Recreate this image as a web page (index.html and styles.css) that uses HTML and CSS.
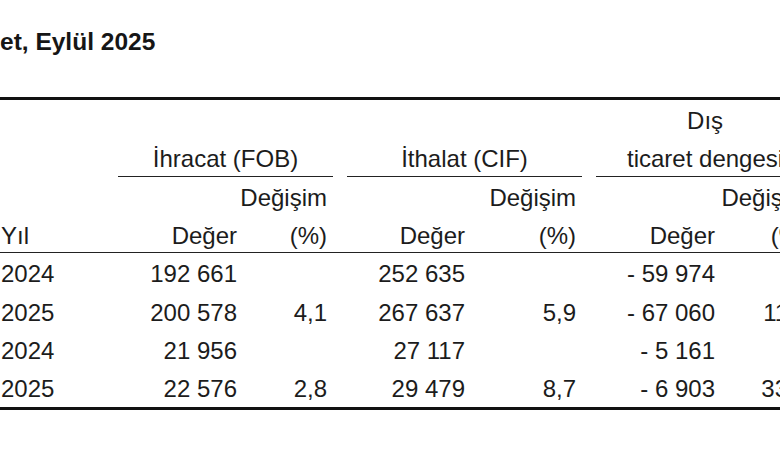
FILE: index.html
```html
<!DOCTYPE html>
<html lang="tr">
<head>
<meta charset="utf-8">
<title>Dış ticaret, Eylül 2025</title>
<link rel="stylesheet" href="styles.css">
</head>
<body>
<div class="page">
  <h1 class="title">et, Eylül 2025</h1>
  <table class="trade">
    <colgroup>
      <col class="c-year">
      <col class="c-exp-val">
      <col class="c-exp-pct">
      <col class="c-imp-val">
      <col class="c-imp-pct">
      <col class="c-bal-val">
      <col class="c-bal-pct">
    </colgroup>
    <thead>
      <tr>
        <td colspan="5"></td>
        <td colspan="2" class="group gap">Dış</td>
      </tr>
      <tr>
        <td></td>
        <td colspan="2" class="group under"><div class="rule">İhracat (FOB)</div></td>
        <td colspan="2" class="group under gap"><div class="rule">İthalat (CIF)</div></td>
        <td colspan="2" class="group under gap"><div class="rule">ticaret dengesi</div></td>
      </tr>
      <tr>
        <td></td><td class="val"></td><td>Değişim</td>
        <td class="val"></td><td>Değişim</td>
        <td class="val"></td><td>Değişim</td>
      </tr>
      <tr class="last-head">
        <td class="year">Yıl</td><td class="val">Değer</td><td>(%)</td>
        <td class="val">Değer</td><td>(%)</td>
        <td class="val">Değer</td><td>(%)</td>
      </tr>
    </thead>
    <tbody>
      <tr>
        <td class="year">2024</td><td class="val">192 661</td><td></td>
        <td class="val">252 635</td><td></td>
        <td class="val">- 59 974</td><td></td>
      </tr>
      <tr>
        <td class="year">2025</td><td class="val">200 578</td><td>4,1</td>
        <td class="val">267 637</td><td>5,9</td>
        <td class="val">- 67 060</td><td>11,8</td>
      </tr>
      <tr>
        <td class="year">2024</td><td class="val">21 956</td><td></td>
        <td class="val">27 117</td><td></td>
        <td class="val">- 5 161</td><td></td>
      </tr>
      <tr>
        <td class="year">2025</td><td class="val">22 576</td><td>2,8</td>
        <td class="val">29 479</td><td>8,7</td>
        <td class="val">- 6 903</td><td>33,8</td>
      </tr>
    </tbody>
  </table>
</div>
</body>
</html>
```

FILE: styles.css
```css
html, body {
  margin: 0;
  padding: 0;
  background: #ffffff;
}

.page {
  width: 780px;
  height: 470px;
  overflow: hidden;
  font-family: "Liberation Sans", Arial, sans-serif;
  color: #1c1c1c;
}

.title {
  margin: 0;
  padding-top: 29px;
  font-size: 24.5px;
  font-weight: bold;
  line-height: 26px;
  color: #161616;
  white-space: nowrap;
}

.trade {
  margin-top: 42px;
  width: 814px;
  table-layout: fixed;
  border-collapse: separate;
  border-spacing: 0;
  border-top: 3px solid #111;
  border-bottom: 3px solid #111;
  font-size: 24px;
}

.c-year { width: 118px; }
.c-exp-val { width: 119px; }
.c-exp-pct { width: 96px; }
.c-imp-val { width: 132px; }
.c-imp-pct { width: 117px; }
.c-bal-val { width: 133px; }
.c-bal-pct { width: 99px; }

.trade td {
  padding: 8px 6px 4.33px 0;
  line-height: 26px;
  white-space: nowrap;
  text-align: right;
  vertical-align: top;
}

.trade td.val {
  padding-right: 0;
}

.trade td.year {
  text-align: left;
  padding-left: 1px;
}

.trade td.group {
  text-align: center;
  padding-right: 0;
}

.trade td.gap {
  padding-left: 14px;
}

.trade td.under {
  padding-bottom: 0;
}

.rule {
  padding-bottom: 3.33px;
  border-bottom: 1px solid #222;
}

.last-head td {
  padding-bottom: 3.33px;
  border-bottom: 1px solid #222;
}
```
